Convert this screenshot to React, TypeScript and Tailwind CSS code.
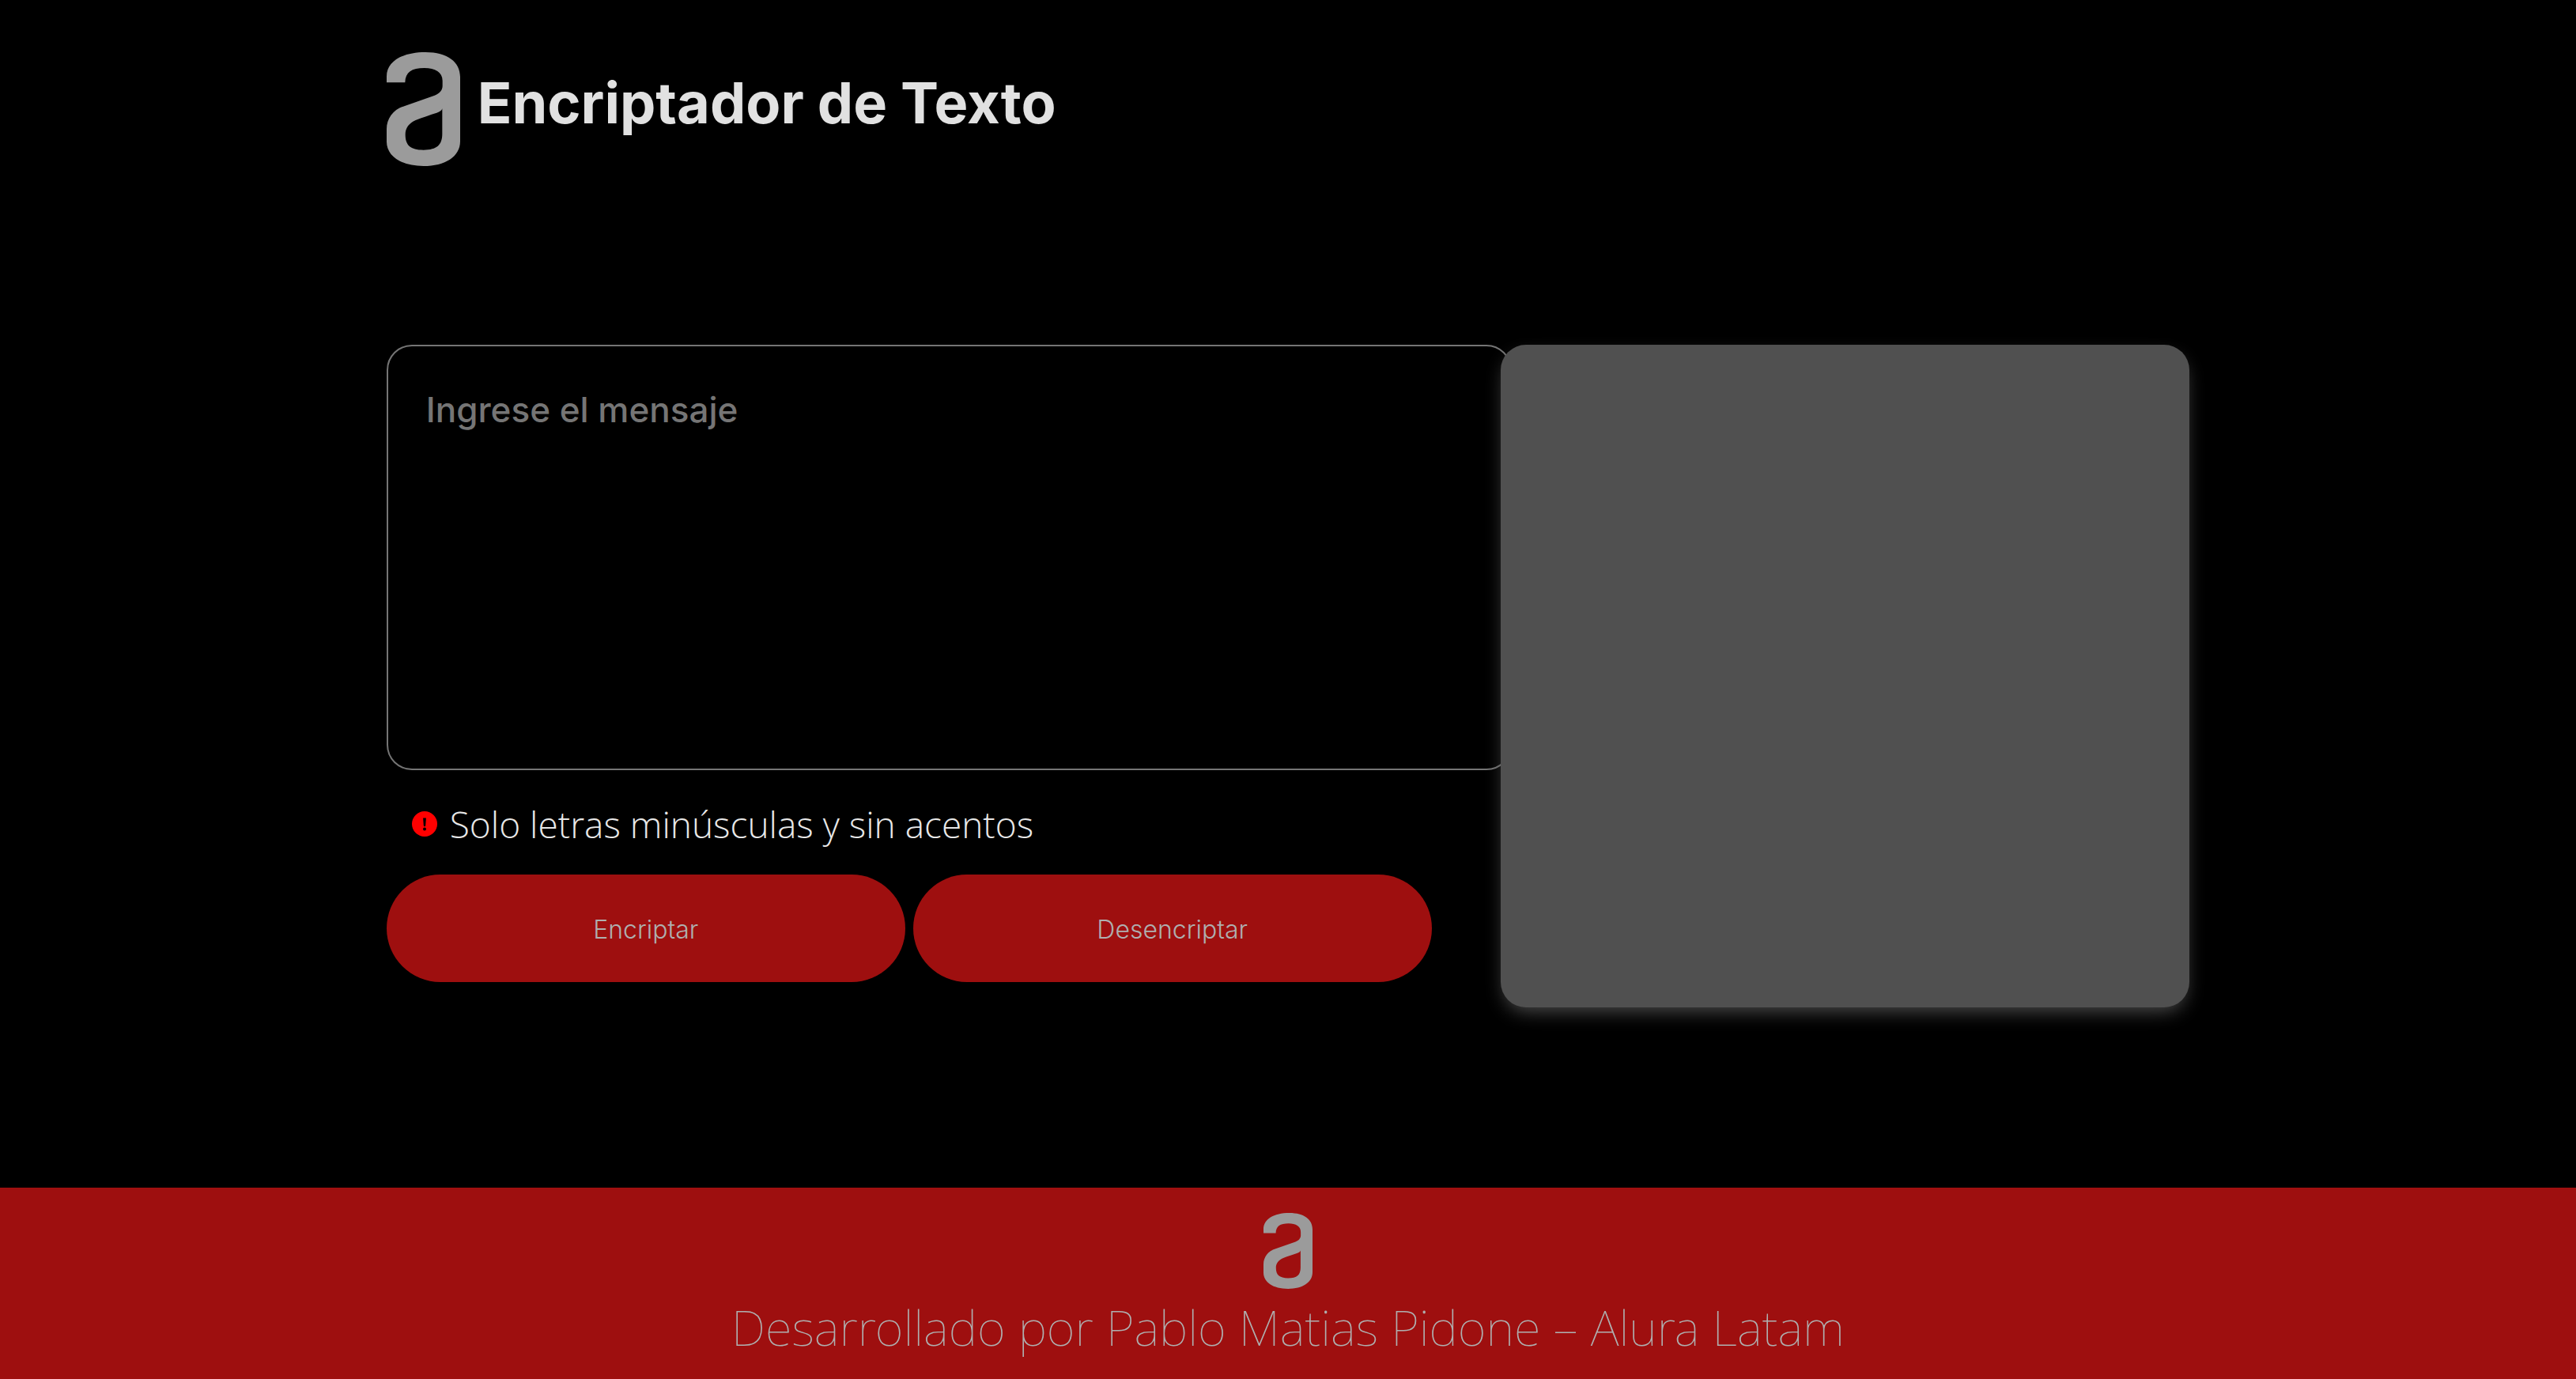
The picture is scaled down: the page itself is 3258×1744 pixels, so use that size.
import { useState } from "react";

function Logo({ className }: { className: string }) {
  return (
    <svg viewBox="0 0 279 432" className={className} role="img" aria-label="Alura">
      <path
        fill="#9b9b9b"
        fillRule="evenodd"
        d="M0 115V92C0 36 58 0 147 0C232 0 279 38 279 94V338C279 396 222 432 140 432C55 432 0 394 0 340V292C0 252 26 216 69 204L182 164C201 157 212 143 212 128V108C212 76 184 60 143 60C95 60 71 76 70 115ZM211 214V310C211 352 191 371 140 371C90 371 71 353 71 312C71 288 85 269 110 258C135 248 165 238 190 230C203 226 209 221 211 214Z"
      />
    </svg>
  );
}

function AlertIcon() {
  return (
    <svg viewBox="0 0 32 32" className="size-8 shrink-0" aria-hidden="true">
      <circle cx="16" cy="16" r="16" fill="#ff0000" />
      <path d="M14.1 8.6h3.8l-.7 9.4a1.2 1.2 0 0 1-2.4 0z" />
      <circle cx="16" cy="22.6" r="2" />
    </svg>
  );
}

function ActionButton({ children }: { children: string }) {
  return (
    <button
      type="button"
      className="h-34 flex-1 rounded-full bg-[#9e0f0f] pt-1 font-['Inter',sans-serif] text-[32px] font-light text-[#afafaf]"
    >
      {children}
    </button>
  );
}

export default function App() {
  const [message, setMessage] = useState("");

  return (
    <div className="flex min-h-screen flex-col bg-black">
      <header className="flex items-start gap-[22px] px-[15%] pt-[66px]">
        <Logo className="h-36 w-[93px] shrink-0" />
        <h1 className="font-['Inter',sans-serif] text-[72px] leading-[128px] font-bold text-[#e1e1e1]">
          Encriptador de Texto
        </h1>
      </header>

      <main className="flex flex-1 items-start px-[15%] pt-[226px] pb-16">
        <section className="min-w-0 flex-1">
          <textarea
            aria-label="Mensaje"
            placeholder="Ingrese el mensaje"
            value={message}
            onChange={(e) => setMessage(e.target.value)}
            className="block h-[538px] w-[101%] resize-none rounded-[32px] border-2 border-[#757575] bg-transparent p-12 font-['Inter',sans-serif] text-[44px] leading-[64px] font-medium text-[#e1e1e1] placeholder:text-[#757575]"
          />
          <p className="flex items-center gap-4 px-8 pt-[38px] pb-[34px] font-['Open_Sans',sans-serif] text-[46px] leading-[60px] font-light text-[#e8e8e8]">
            <AlertIcon />
            Solo letras minúsculas y sin acentos
          </p>
          <div className="flex w-[93.8%] gap-2.5">
            <ActionButton>Encriptar</ActionButton>
            <ActionButton>Desencriptar</ActionButton>
          </div>
        </section>
        <section
          aria-label="Resultado"
          className="relative min-h-[838px] w-[38.2%] rounded-[32px] bg-[#505050] shadow-[0_10px_24px_-6px_#505050]"
        />
      </main>

      <footer className="flex flex-col items-center bg-[#9e0f0f] pt-8 pb-[18px]">
        <Logo className="h-24 w-[62px]" />
        <p className="font-['Noto_Sans',sans-serif] text-[62px] leading-[96px] font-thin text-[#afafaf]">
          Desarrollado por Pablo Matias Pidone – Alura Latam
        </p>
      </footer>
    </div>
  );
}
